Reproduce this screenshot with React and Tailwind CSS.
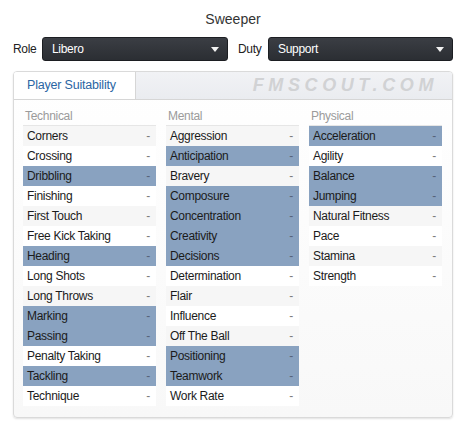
import React from "react";

const technical = [
  ["Corners", false],
  ["Crossing", false],
  ["Dribbling", true],
  ["Finishing", false],
  ["First Touch", false],
  ["Free Kick Taking", false],
  ["Heading", true],
  ["Long Shots", false],
  ["Long Throws", false],
  ["Marking", true],
  ["Passing", true],
  ["Penalty Taking", false],
  ["Tackling", true],
  ["Technique", false],
];

const mental = [
  ["Aggression", false],
  ["Anticipation", true],
  ["Bravery", false],
  ["Composure", true],
  ["Concentration", true],
  ["Creativity", true],
  ["Decisions", true],
  ["Determination", false],
  ["Flair", false],
  ["Influence", false],
  ["Off The Ball", false],
  ["Positioning", true],
  ["Teamwork", true],
  ["Work Rate", false],
];

const physical = [
  ["Acceleration", true],
  ["Agility", false],
  ["Balance", true],
  ["Jumping", true],
  ["Natural Fitness", false],
  ["Pace", false],
  ["Stamina", false],
  ["Strength", false],
];

function Select({ value, className = "" }) {
  return (
    <div
      className={`h-[24px] flex items-center justify-between pl-[9px] pr-[8px] rounded-[3px] border border-[#1c1e22] bg-gradient-to-b from-[#3b3e44] to-[#2b2e33] text-white ${className}`}
    >
      <span>{value}</span>
      <svg width="8" height="5" viewBox="0 0 8 5">
        <path d="M0 0 L8 0 L4 5 Z" fill="#f2f2f2" />
      </svg>
    </div>
  );
}

function Column({ title, rows }) {
  return (
    <div className="w-[133px]">
      <div className="h-[20px] leading-[20px] text-[#9b9b9b] pl-[2px] border-b border-[#e6e6e6]">
        {title}
      </div>
      {rows.map(([name, hi], i) => (
        <div
          key={name}
          className={`h-[20px] flex items-center justify-between pl-[4px] pr-[6px] ${
            hi ? "bg-[#89a2c0]" : i % 2 === 0 ? "bg-[#f6f6f6]" : "bg-white"
          }`}
        >
          <span className="text-[#1b1b1b]">{name}</span>
          <span className={hi ? "text-[#56637a]" : "text-[#7d7d7d]"}>-</span>
        </div>
      ))}
    </div>
  );
}

export default function App() {
  return (
    <div className="w-[466px] h-[431px] bg-white font-['Liberation_Sans',Arial,sans-serif] text-[12px] tracking-[-0.3px] text-[#222]">
      <div className="pt-[11px] h-[27px] text-center text-[14px] leading-[16px] tracking-normal text-[#333]">
        Sweeper
      </div>

      <div className="mt-[10px] px-[13px] flex items-center">
        <span className="w-[29px]">Role</span>
        <Select value="Libero" className="w-[186px]" />
        <span className="ml-[10px] w-[30px]">Duty</span>
        <Select value="Support" className="flex-1" />
      </div>

      <div className="mt-[10px] mx-[13px] h-[347px] rounded-[4px] border border-[#dadada] bg-gradient-to-b from-white to-[#f8f8f8] shadow-[0_1px_2px_rgba(0,0,0,0.12)] overflow-hidden">
        <div className="h-[28px] flex border-b border-[#d6d6d6] bg-gradient-to-b from-[#f1f2f5] to-[#eaecf0]">
          <div className="w-[122px] bg-white border-r border-[#d6d6d6] flex items-center pl-[13px] text-[#2a65a3] text-[12.5px] tracking-[-0.2px]">
            Player Suitability
          </div>
          <div className="flex-1 flex items-center justify-end pr-[14px]">
            <span className="font-bold italic text-[18px] tracking-[4.6px] text-[#d1d2d4]">
              FMSCOUT.COM
            </span>
          </div>
        </div>

        <div className="pt-[6px] pl-[9px] flex gap-[10px]">
          <Column title="Technical" rows={technical} />
          <Column title="Mental" rows={mental} />
          <Column title="Physical" rows={physical} />
        </div>
      </div>
    </div>
  );
}
